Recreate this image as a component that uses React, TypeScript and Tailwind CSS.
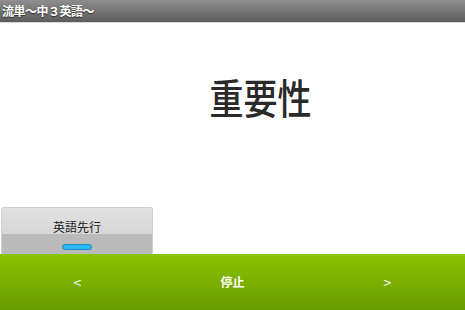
import React from 'react'

const jp = { fontFamily: '"Noto Sans CJK JP", "Noto Sans", sans-serif' }

export default function App() {
  return (
    <div className="w-[465px] h-[310px] flex flex-col bg-white overflow-hidden" style={jp}>
      <div className="h-[22px] flex items-center px-[2px] bg-gradient-to-b from-[#8e8e8e] to-[#5c5c5c] border-b border-[#d8d8d8] box-content">
        <span className="text-white text-[12px] font-bold leading-none [text-shadow:0_1px_1px_rgba(0,0,0,0.6)] tracking-[-0.5px]">流単〜中３英語〜</span>
      </div>
      <div className="flex-1 flex flex-col">
        <div className="flex-1 flex justify-center pt-[57px] pl-[56px]">
          <span className="inline-block h-fit text-[34px] font-medium leading-none text-[#2a2a2a] scale-y-[1.2]">重要性</span>
        </div>
        <div className="px-[1px]">
          <div className="w-[152px] h-[47px] rounded-t-[3px] border border-[#cfcfcf] border-b-0 flex flex-col overflow-hidden">
            <div className="h-[26px] bg-gradient-to-b from-[#e2e2e2] to-[#d6d6d6] flex items-end justify-center pb-[1px]">
              <span className="text-[12px] leading-none text-[#222]">英語先行</span>
            </div>
            <div className="flex-1 bg-[#bababa] flex justify-center pt-[10px]">
              <div className="w-[30px] h-[6px] rounded-full bg-[#2ab8f5] border border-[#1a8fc4]" />
            </div>
          </div>
        </div>
      </div>
      <div className="h-[56px] grid grid-cols-3 bg-gradient-to-b from-[#8cc400] to-[#699b00] text-white">
        <div className="flex items-center justify-center text-[14px]">&lt;</div>
        <div className="flex items-center justify-center text-[12px] font-bold">停止</div>
        <div className="flex items-center justify-center text-[14px]">&gt;</div>
      </div>
    </div>
  )
}
